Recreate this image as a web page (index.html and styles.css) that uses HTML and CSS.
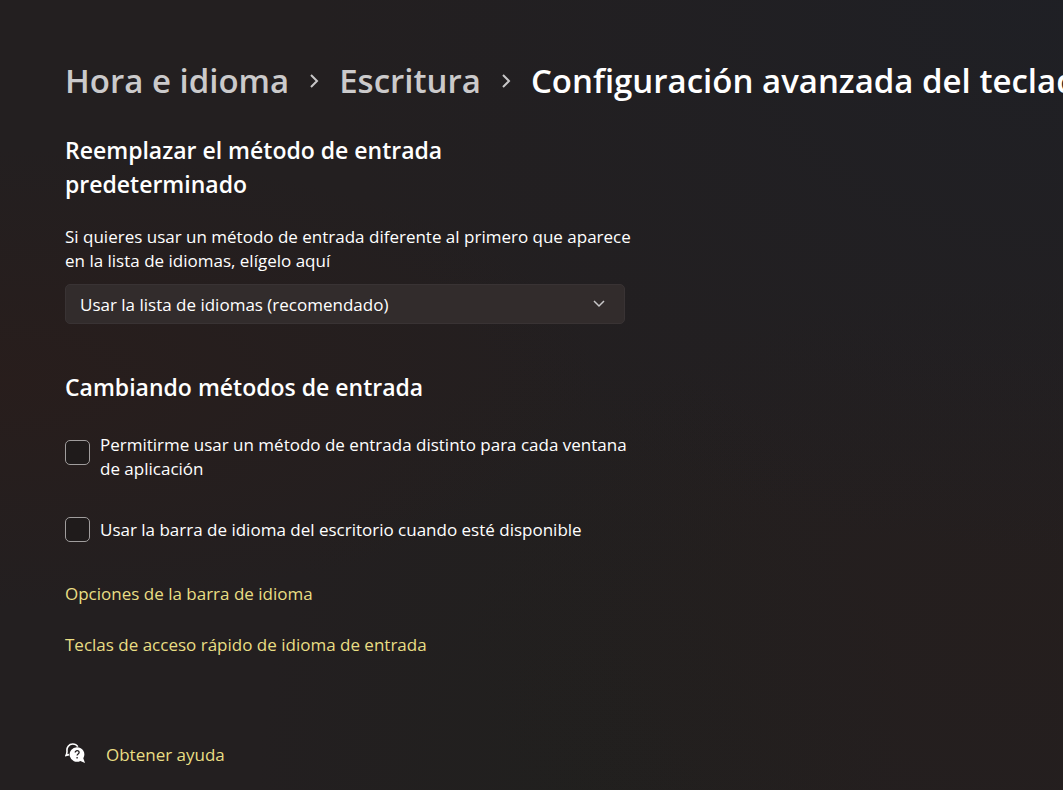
FILE: index.html
```html
<!DOCTYPE html>
<html lang="es">
<head>
    <meta charset="UTF-8">
    <meta name="viewport" content="width=device-width, initial-scale=1">
    <title>Configuración avanzada del teclado</title>
    <link rel="stylesheet" href="styles.css">
</head>
<body>
    <nav class="breadcrumb">
        <a href="#hora">Hora e idioma</a>
        <svg class="separator" width="10" height="18" viewBox="0 0 10 18"><path d="M2 3l6 6-6 6"/></svg>
        <a href="#escritura">Escritura</a>
        <svg class="separator" width="10" height="18" viewBox="0 0 10 18"><path d="M2 3l6 6-6 6"/></svg>
        <h1>Configuración avanzada del teclado</h1>
    </nav>

    <main class="content">
        <section>
            <h2>Reemplazar el método de entrada predeterminado</h2>
            <label class="description" for="metodo">Si quieres usar un método de entrada diferente al primero que aparece en la lista de idiomas, elígelo aquí</label>
            <div class="dropdown">
                <select id="metodo" name="metodo">
                    <option>Usar la lista de idiomas (recomendado)</option>
                </select>
                <svg class="chevron" width="12" height="8" viewBox="0 0 12 8"><path d="M1 1l5 5 5-5"/></svg>
            </div>
        </section>

        <section class="switching">
            <h2>Cambiando métodos de entrada</h2>
            <div class="option">
                <input type="checkbox" id="ventana" name="ventana">
                <label for="ventana">Permitirme usar un método de entrada distinto para cada ventana de aplicación</label>
            </div>
            <div class="option">
                <input type="checkbox" id="barra" name="barra">
                <label for="barra">Usar la barra de idioma del escritorio cuando esté disponible</label>
            </div>
        </section>

        <div class="links">
            <a href="#opciones">Opciones de la barra de idioma</a>
            <a href="#teclas">Teclas de acceso rápido de idioma de entrada</a>
        </div>

        <div class="help">
            <svg width="21" height="24" viewBox="0 0 21 24">
                <path class="back" d="M12.800 3.600C11.600 1.800 9.800 1 7.800 1 3.800 1 1.500 4.500 2 8c.1 1.300-.2 2.600-.9 4.300l2.900-.7"/>
                <path class="bubble" d="M12 4.200a7.300 7.300 0 1 0 3.400 13.700L20 20l-1.700-4.800A7.300 7.300 0 0 0 12 4.200z"/>
                <path class="mark" d="M10.200 9.600c0-2.600 3.900-2.500 3.900 0 0 1.500-2 1.500-2 3M12.100 13.900v1.500"/>
            </svg>
            <a href="#ayuda">Obtener ayuda</a>
        </div>
    </main>
</body>
</html>
```

FILE: styles.css
```css
* {
    box-sizing: border-box;
}

body {
    margin: 0;
    padding: 56px 0 0 65px;
    min-height: 100vh;
    font-family: "Segoe UI", "Open Sans", "Noto Sans", sans-serif;
    font-size: 17px;
    line-height: 24px;
    color: #fff;
    background-color: #231f20;
    background-image:
        radial-gradient(ellipse at 0% 48%, rgba(41, 29, 27, 0.8), transparent 40%),
        radial-gradient(ellipse at 100% 0%, rgba(30, 32, 38, 0.8), transparent 50%),
        radial-gradient(ellipse at 100% 80%, rgba(37, 30, 29, 0.8), transparent 40%),
        radial-gradient(ellipse at 55% 100%, rgba(32, 32, 30, 0.8), transparent 40%);
}

a {
    color: #e9de84;
    text-decoration: none;
}

.breadcrumb {
    display: flex;
    align-items: center;
    gap: 20px;
    overflow: hidden;
    font-size: 33px;
    font-weight: 600;
    line-height: 50px;
    white-space: nowrap;
}

.breadcrumb a {
    color: #cbcacb;
}

.breadcrumb h1 {
    margin: 0;
    font-size: 33px;
    font-weight: 600;
}

.separator {
    flex: none;
}

svg path {
    fill: none;
    stroke: #c8c7c8;
    stroke-width: 2;
}

.content {
    max-width: 580px;
    margin-top: 27px;
}

h2 {
    max-width: 440px;
    margin: 0;
    font-size: 23px;
    font-weight: 600;
    line-height: 34px;
}

.description {
    display: block;
    margin-top: 24px;
}

.dropdown {
    display: grid;
    align-items: center;
    max-width: 560px;
    margin-top: 11px;
}

.dropdown select,
.dropdown .chevron {
    grid-area: 1 / 1;
}

.dropdown select {
    appearance: none;
    width: 100%;
    height: 40px;
    padding: 2px 48px 0 14px;
    font: inherit;
    color: #fff;
    background-color: #322c2c;
    border: 1px solid #393334;
    border-radius: 5px;
}

.dropdown .chevron {
    justify-self: end;
    margin-right: 20px;
    pointer-events: none;
}

.chevron path {
    stroke-width: 1.5;
}

.switching {
    margin-top: 46px;
}

.option {
    display: flex;
    align-items: center;
    gap: 10px;
    min-height: 40px;
    margin-top: 29px;
}

.option input {
    appearance: none;
    flex: none;
    align-self: flex-start;
    width: 25px;
    height: 25px;
    margin: 7px 0 0;
    background-color: #1f1b1b;
    border: 1px solid #a09d9d;
    border-radius: 5px;
}

.option input:checked {
    background-color: #e9de84;
}

.links {
    display: flex;
    flex-direction: column;
    align-items: flex-start;
    gap: 27px;
    margin-top: 32px;
}

.help {
    display: flex;
    align-items: center;
    gap: 20px;
    margin-top: 86px;
}

.help .back {
    stroke: #fff;
    stroke-width: 1.6;
}

.help .bubble {
    fill: #fff;
    stroke: none;
}

.help .mark {
    stroke: #231f20;
    stroke-width: 1.3;
}
```
